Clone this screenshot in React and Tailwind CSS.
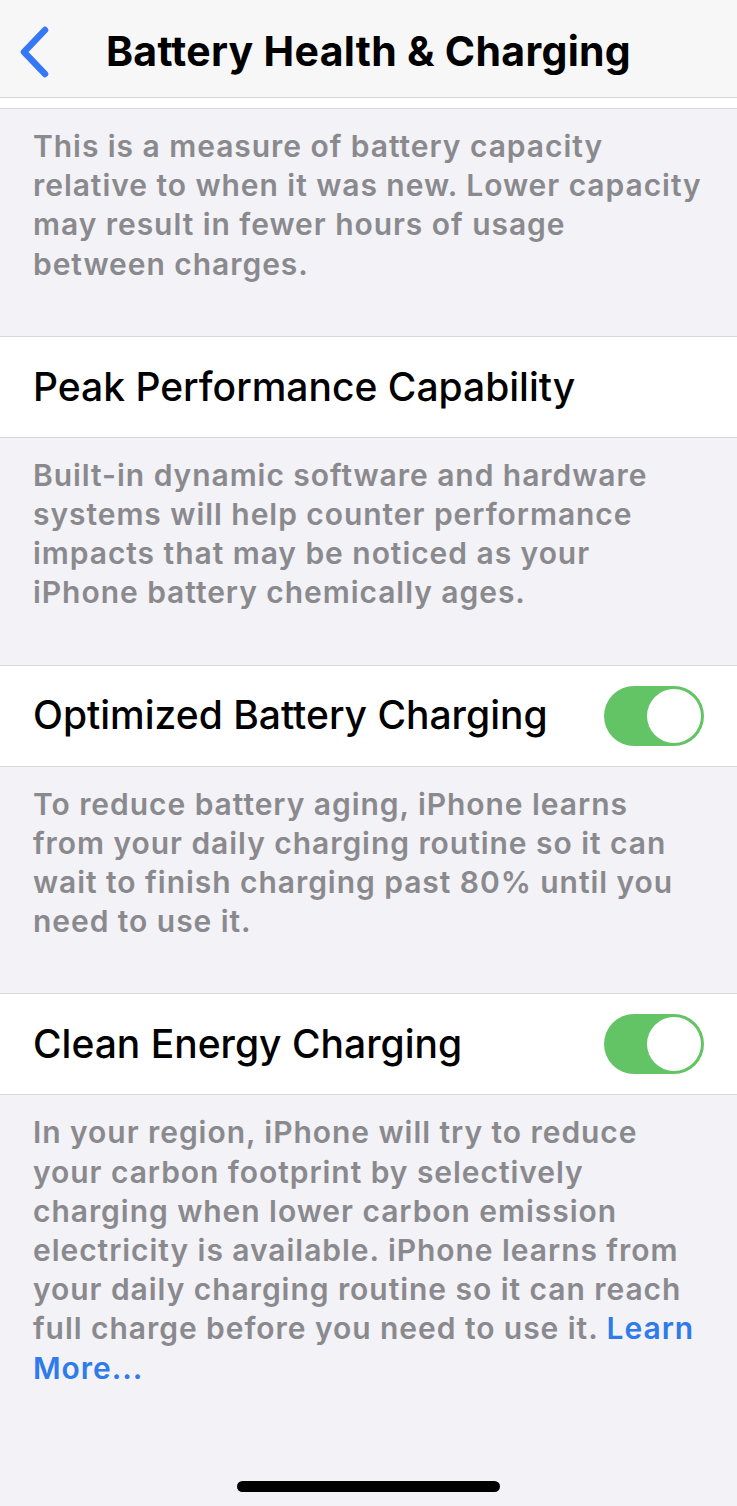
import React from 'react';

const font = { fontFamily: 'Inter, "Noto Sans", sans-serif' };

function Toggle() {
  return (
    <div className="w-[100px] h-[60px] rounded-full bg-[#63c465] flex items-center justify-end pr-[3px]">
      <div className="w-[54px] h-[54px] rounded-full bg-white" />
    </div>
  );
}

function Cell({ title, toggle }) {
  return (
    <div className="bg-white border-y border-[#d8d8dc] h-[102px] flex items-center justify-between pl-[33px] pr-[33px]">
      <span className="text-[39px] font-medium text-black tracking-[0px]">{title}</span>
      {toggle && <Toggle />}
    </div>
  );
}

function Note({ lines }) {
  return (
    <p className="px-[33px] pt-[18px] pb-[52px] text-[30px] leading-[39.2px] font-semibold text-[#8a8a8e] tracking-[0.95px] whitespace-nowrap">
      {lines.map((l, i) => (
        <span key={i} className="block">
          {l}
        </span>
      ))}
    </p>
  );
}

export default function App() {
  return (
    <div className="w-[737px] h-[1506px] bg-[#f2f2f7] relative overflow-hidden" style={font}>
      <div className="h-[98px] bg-[#f7f7f7] border-b border-[#d4d4d6] flex items-center justify-center relative">
        <svg className="absolute left-[14px] top-[24px]" width="40" height="56" viewBox="0 0 40 56">
          <path d="M31 6 L10 28 L31 50" fill="none" stroke="#3478f6" strokeWidth="6.5" strokeLinecap="round" strokeLinejoin="round" />
        </svg>
        <span className="text-[41px] font-bold text-black tracking-[0.3px] pt-[6px]">Battery Health &amp; Charging</span>
      </div>
      <div className="h-[11px] bg-white border-b border-[#d8d8dc]" />
      <Note
        lines={[
          'This is a measure of battery capacity',
          'relative to when it was new. Lower capacity',
          'may result in fewer hours of usage',
          'between charges.',
        ]}
      />
      <Cell title="Peak Performance Capability" />
      <Note
        lines={[
          'Built-in dynamic software and hardware',
          'systems will help counter performance',
          'impacts that may be noticed as your',
          'iPhone battery chemically ages.',
        ]}
      />
      <Cell title="Optimized Battery Charging" toggle />
      <Note
        lines={[
          'To reduce battery aging, iPhone learns',
          'from your daily charging routine so it can',
          'wait to finish charging past 80% until you',
          'need to use it.',
        ]}
      />
      <Cell title="Clean Energy Charging" toggle />
      <p className="px-[33px] pt-[18px] pb-[52px] text-[30px] leading-[39.2px] font-semibold text-[#8a8a8e] tracking-[0.95px] whitespace-nowrap">
        <span className="block">In your region, iPhone will try to reduce</span>
        <span className="block">your carbon footprint by selectively</span>
        <span className="block">charging when lower carbon emission</span>
        <span className="block">electricity is available. iPhone learns from</span>
        <span className="block">your daily charging routine so it can reach</span>
        <span className="block">
          full charge before you need to use it. <span className="text-[#2f7bea]">Learn</span>
        </span>
        <span className="block text-[#2f7bea]">More...</span>
      </p>
      <div className="absolute left-[237px] top-[1481px] w-[263px] h-[11px] rounded-full bg-black" />
    </div>
  );
}
